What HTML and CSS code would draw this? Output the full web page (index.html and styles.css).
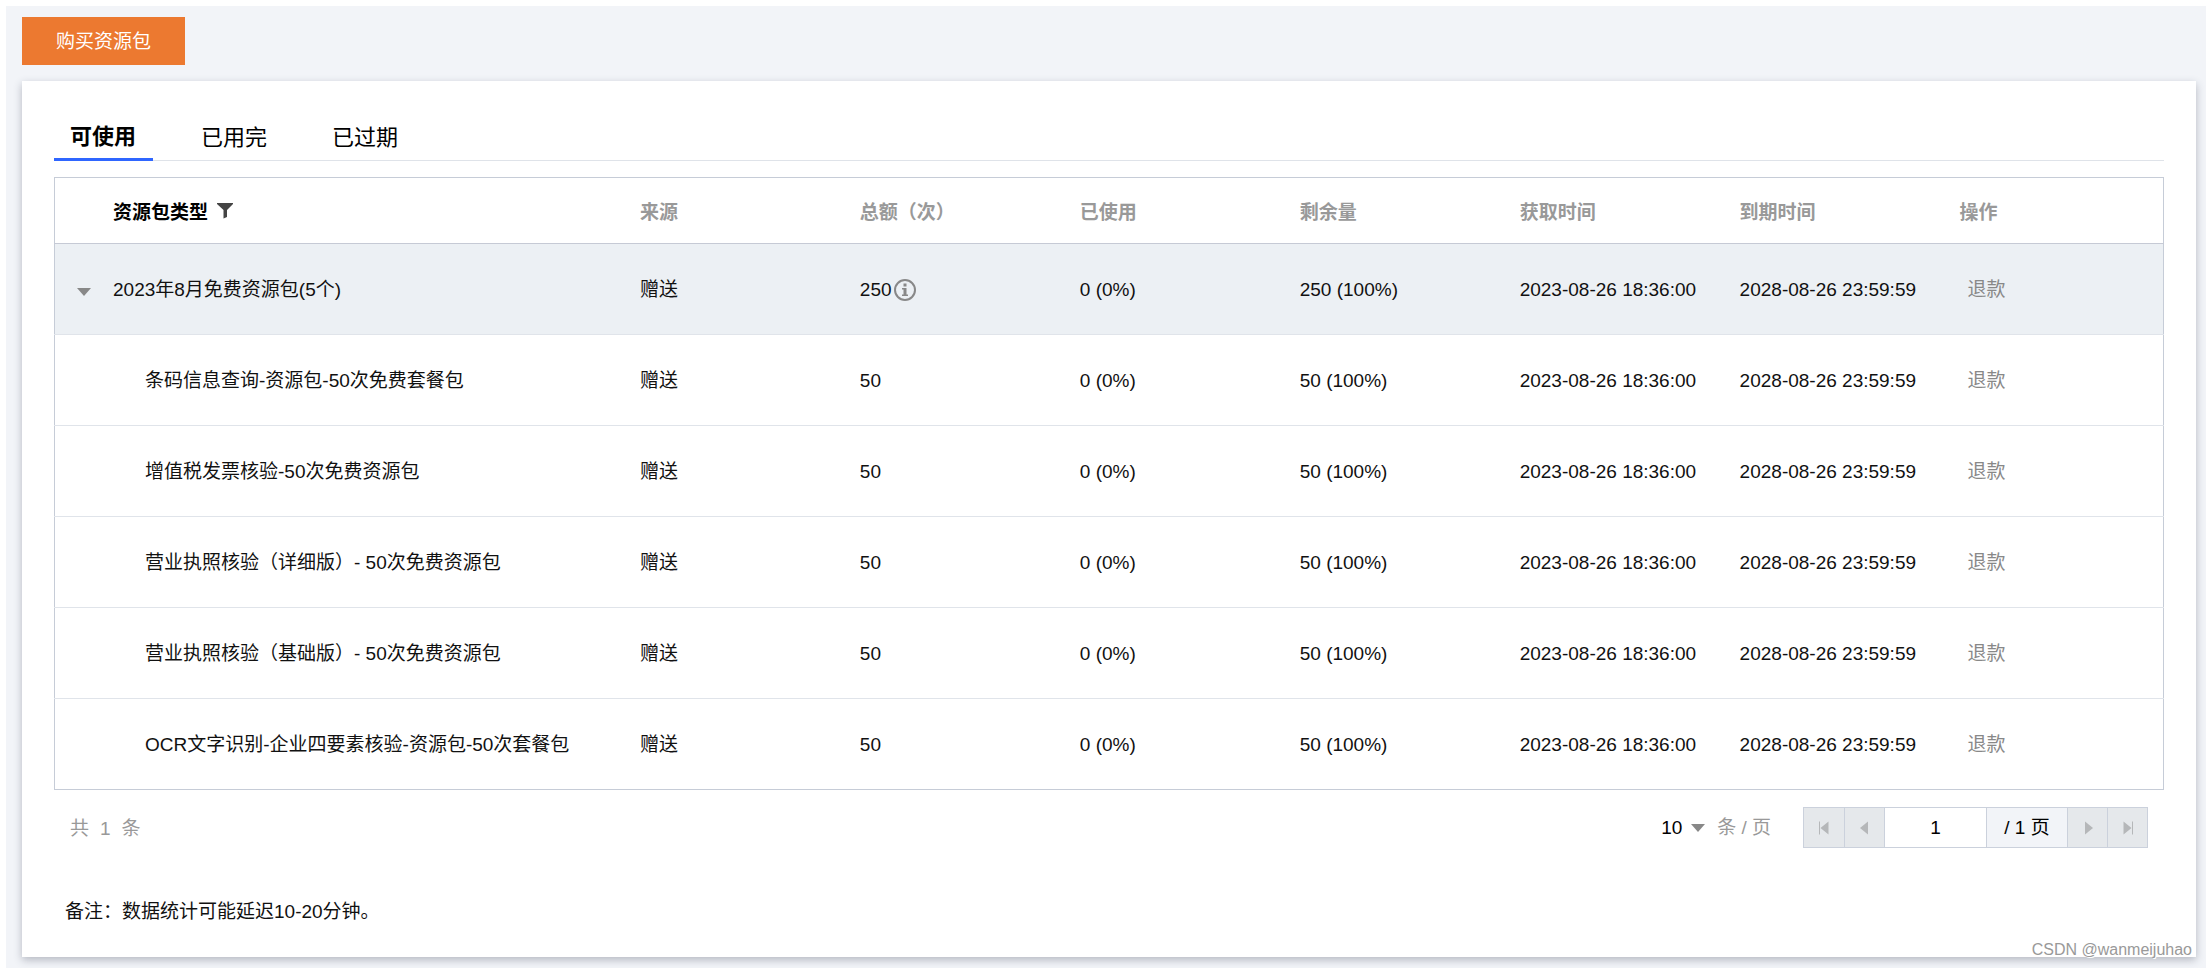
FILE: index.html
```html
<!DOCTYPE html>
<html lang="zh-CN">
<head>
<meta charset="utf-8">
<title>资源包</title>
<link rel="stylesheet" href="styles.css">
</head>
<body>
<main class="page">
  <button class="buy" type="button">购买资源包</button>
  <section class="card">
    <nav class="tabs">
      <button class="tab tab-active" type="button">可使用</button>
      <button class="tab" type="button">已用完</button>
      <button class="tab" type="button">已过期</button>
    </nav>
    <table class="packs">
      <colgroup><col class="col-name"><col><col><col><col><col><col><col></colgroup>
      <thead>
        <tr>
          <th class="name name-head" scope="col">资源包类型<svg class="funnel" viewBox="0 0 16 16" aria-hidden="true"><path d="M0 0H16V1L10 7V14L6.500 15.500V7L0 1Z"/></svg></th>
          <th scope="col">来源</th><th scope="col">总额（次）</th><th scope="col">已使用</th><th scope="col">剩余量</th><th scope="col">获取时间</th><th scope="col">到期时间</th><th scope="col">操作</th>
        </tr>
      </thead>
      <tbody>
        <tr class="group">
          <td class="name"><button class="toggle" type="button" aria-label="收起"><span class="caret"></span></button>2023年8月免费资源包(5个)</td>
          <td>赠送</td>
          <td><span class="total">250<svg class="info" viewBox="0 0 24 24" aria-hidden="true"><circle cx="12" cy="12" r="10"/><path d="M10.500 5.500h3v3h-3zM9 10h4.500v6.500H15V18H9v-1.500h1.500v-5H9z"/></svg></span></td>
          <td>0 (0%)</td><td>250 (100%)</td><td>2023-08-26 18:36:00</td><td>2028-08-26 23:59:59</td>
          <td><button class="refund" type="button">退款</button></td>
        </tr>
        <tr><td class="name child">条码信息查询-资源包-50次免费套餐包</td><td>赠送</td><td>50</td><td>0 (0%)</td><td>50 (100%)</td><td>2023-08-26 18:36:00</td><td>2028-08-26 23:59:59</td><td><button class="refund" type="button">退款</button></td></tr>
        <tr><td class="name child">增值税发票核验-50次免费资源包</td><td>赠送</td><td>50</td><td>0 (0%)</td><td>50 (100%)</td><td>2023-08-26 18:36:00</td><td>2028-08-26 23:59:59</td><td><button class="refund" type="button">退款</button></td></tr>
        <tr><td class="name child">营业执照核验（详细版）- 50次免费资源包</td><td>赠送</td><td>50</td><td>0 (0%)</td><td>50 (100%)</td><td>2023-08-26 18:36:00</td><td>2028-08-26 23:59:59</td><td><button class="refund" type="button">退款</button></td></tr>
        <tr><td class="name child">营业执照核验（基础版）- 50次免费资源包</td><td>赠送</td><td>50</td><td>0 (0%)</td><td>50 (100%)</td><td>2023-08-26 18:36:00</td><td>2028-08-26 23:59:59</td><td><button class="refund" type="button">退款</button></td></tr>
        <tr><td class="name child">OCR文字识别-企业四要素核验-资源包-50次套餐包</td><td>赠送</td><td>50</td><td>0 (0%)</td><td>50 (100%)</td><td>2023-08-26 18:36:00</td><td>2028-08-26 23:59:59</td><td><button class="refund" type="button">退款</button></td></tr>
      </tbody>
    </table>
    <div class="footer">
      <div class="count"><span>共</span><span>1</span><span>条</span></div>
      <div class="paging">
        <label class="size"><select class="size-select" aria-label="每页条数"><option>10</option></select><span class="caret"></span><span class="size-unit">条 / 页</span></label>
        <div class="pager">
          <button class="step" type="button" aria-label="第一页" disabled><svg class="arrow" viewBox="0 0 12 14"><path d="M1 0.500H2V13.500H1zM2.500 7L10.500 0.500V13.500Z"/></svg></button>
          <button class="step" type="button" aria-label="上一页" disabled><svg class="arrow" viewBox="0 0 12 14"><path d="M1 7L9 0.500V13.500Z"/></svg></button>
          <input class="current" type="text" value="1" aria-label="页码">
          <span class="pages">/ 1 页</span>
          <button class="step" type="button" aria-label="下一页" disabled><svg class="arrow" viewBox="0 0 12 14"><path d="M11 7L3 0.500V13.500Z"/></svg></button>
          <button class="step" type="button" aria-label="最后一页" disabled><svg class="arrow" viewBox="0 0 12 14"><path d="M10 0.500H11V13.500H10zM9.500 7L1.500 0.500V13.500Z"/></svg></button>
        </div>
      </div>
    </div>
    <p class="note">备注：数据统计可能延迟10-20分钟。</p>
  </section>
  <span class="watermark">CSDN @wanmeijuhao</span>
</main>
</body>
</html>
```
FILE: styles.css
```css
* { box-sizing: border-box; }

body {
  margin: 0;
  padding: 6px 0 0 6px;
  background: #fff;
  color: #111;
  font: 19px/28px "Liberation Sans", "Noto Sans CJK SC", sans-serif;
}

button, input, select {
  margin: 0;
  padding: 0;
  border: 0;
  border-radius: 0;
  background: none;
  color: inherit;
  font: inherit;
}

.page {
  position: relative;
  display: flex;
  flex-direction: column;
  align-items: stretch;
  gap: 16px;
  min-height: calc(100vh - 6px);
  padding: 11px 10px 11px 16px;
  background: #f2f4f8;
}

.buy {
  align-self: flex-start;
  height: 48px;
  padding: 2px 34px 0;
  background: #ec7930;
  color: #fff;
}

.card {
  flex: 1;
  padding: 32px 32px 0;
  background: #fff;
  box-shadow: 0 3px 8px rgba(54, 58, 80, 0.32);
}

.tabs {
  display: flex;
  gap: 32px;
  height: 48px;
  border-bottom: 1px solid #dfe3e9;
}

.tab {
  height: 48px;
  padding: 2px 17px 0 16px;
  color: #000;
  font-size: 22px;
}

.tab-active {
  border-bottom: 3px solid #2f66ff;
  font-weight: bold;
}

.packs {
  width: 100%;
  margin-top: 16px;
  border: 1px solid #c6ccd7;
  border-collapse: collapse;
  table-layout: fixed;
}

.col-name { width: 27%; }

.packs th, .packs td {
  padding: 0 0 0 16px;
  text-align: left;
  white-space: nowrap;
}

.packs th {
  height: 66px;
  padding-top: 4px;
  border-bottom: 1px solid #c6cad5;
  color: #999;
}

.packs td {
  height: 91px;
  padding-top: 2px;
  border-bottom: 1px solid #e0e4ea;
}

.packs tr:last-child td { border-bottom-color: #c6ccd7; }

.packs .name { padding-left: 58px; }
.packs .name-head { color: #000; }
.packs .child { padding-left: 90px; }

.group { background: #ecf0f4; }

.funnel {
  width: 16px;
  height: 16px;
  margin-left: 9px;
  fill: #444;
}

.toggle {
  width: 36px;
  height: 28px;
  margin-left: -36px;
  text-align: left;
}

.caret {
  display: inline-block;
  border: 7px solid transparent;
  border-top: 8px solid #888;
  border-bottom: 0;
}

.total {
  display: flex;
  align-items: center;
  gap: 1px;
}

.info {
  width: 24px;
  height: 24px;
  fill: #888;
}

.info circle {
  fill: none;
  stroke: #888;
  stroke-width: 2;
}

.refund {
  padding: 0 8px;
  color: #888;
}

.footer {
  display: flex;
  align-items: center;
  justify-content: space-between;
  margin-top: 17px;
  padding: 0 16px;
}

.count {
  display: flex;
  gap: 11px;
  padding-top: 3px;
  color: #999;
}

.paging {
  display: flex;
  align-items: center;
  gap: 32px;
}

.size {
  display: flex;
  align-items: center;
}

.size-select {
  width: 30px;
  appearance: none;
  color: #000;
}

.size-unit {
  margin-left: 12px;
  color: #999;
}

.pager {
  display: flex;
  height: 41px;
  border: 1px solid #cbd1dc;
}

.step {
  display: grid;
  place-items: center;
  width: 40px;
  background: #e5e8eb;
}

.step + .step, .pages + .step { border-left: 1px solid #cbd1dc; }

.arrow {
  width: 12px;
  height: 14px;
  fill: #b5b7b9;
}

.current {
  width: 102px;
  border-left: 1px solid #cbd1dc;
  color: #000;
  text-align: center;
}

.pages {
  width: 81px;
  border-left: 1px solid #cbd1dc;
  background: #f2f4f8;
  color: #000;
  line-height: 39px;
  text-align: center;
}

.note {
  margin: 50px 0 0;
  padding: 0 11px 31px;
}

.watermark {
  position: absolute;
  right: 14px;
  bottom: 4px;
  color: #999;
  font-size: 16px;
  text-shadow: 1px 1px 0 #fff;
}
```
